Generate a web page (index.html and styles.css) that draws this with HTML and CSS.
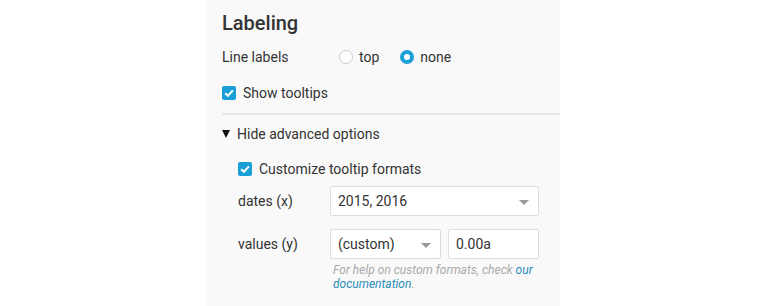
FILE: index.html
```html
<!DOCTYPE html>
<html lang="en">
<head>
  <meta charset="UTF-8" />
  <title>Labeling</title>
  <link rel="stylesheet" href="styles.css">
</head>
<body>
  <div class="panel">
    <h3 class="panel-title">Labeling</h3>

    <div class="row">
      <span class="row-label">Line labels</span>
      <label class="radio"><span class="radio-dot"></span>top</label>
      <label class="radio"><span class="radio-dot checked"></span>none</label>
    </div>

    <label class="check-row">
      <span class="checkbox"><svg viewBox="0 0 14 14" width="14" height="14"><path d="M3.2 7.2 L5.9 9.8 L10.9 4.4" fill="none" stroke="#fff" stroke-width="2"/></svg></span>
      Show tooltips
    </label>

    <hr class="divider">

    <div class="toggle"><span class="caret"></span>Hide advanced options</div>

    <div class="advanced">
      <label class="check-row">
        <span class="checkbox"><svg viewBox="0 0 14 14" width="14" height="14"><path d="M3.2 7.2 L5.9 9.8 L10.9 4.4" fill="none" stroke="#fff" stroke-width="2"/></svg></span>
        Customize tooltip formats
      </label>

      <div class="field">
        <span class="field-label">dates (x)</span>
        <div class="select wide">2015, 2016<span class="arrow"></span></div>
      </div>

      <div class="field">
        <span class="field-label">values (y)</span>
        <div class="select narrow">(custom)<span class="arrow"></span></div>
        <div class="text-input">0.00a</div>
      </div>

      <p class="help">For help on custom formats, check <a href="#">our documentation</a>.</p>
    </div>
  </div>
</body>
</html>
```

FILE: styles.css
```css
* {
  box-sizing: border-box;
  margin: 0;
  padding: 0;
}

body {
  font-family: Roboto, "Liberation Sans", sans-serif;
  background-color: #fff;
  color: #333;
  font-size: 14px;
  width: 765px;
  height: 306px;
  overflow: hidden;
}

.panel {
  background-color: #f9f9f9;
  width: 354px;
  height: 306px;
  margin-left: 206px;
  padding: 11px 0 0 16px;
}

.panel-title {
  font-size: 20px;
  font-weight: 500;
  line-height: 24px;
  color: #333;
}

.row {
  display: flex;
  align-items: center;
  height: 20px;
  margin-top: 12px;
}

.row-label {
  width: 117px;
}

.radio {
  display: flex;
  align-items: center;
  margin-right: 21px;
}

.radio-dot {
  width: 14px;
  height: 14px;
  border-radius: 50%;
  border: 1px solid #ccc;
  background-color: #fff;
  margin-right: 6px;
}

.radio-dot.checked {
  border: 4px solid #1a9fd6;
}

.check-row {
  display: flex;
  align-items: center;
  height: 20px;
  margin-top: 16px;
}

.checkbox {
  width: 14px;
  height: 14px;
  border-radius: 2px;
  background-color: #1a9fd6;
  margin-right: 7px;
  display: flex;
}

.divider {
  border: none;
  border-top: 2px solid #e8e8e8;
  margin-top: 10px;
}

.toggle {
  display: flex;
  align-items: center;
  height: 20px;
  margin-top: 9px;
}

.caret {
  width: 0;
  height: 0;
  border-left: 4.5px solid transparent;
  border-right: 4.5px solid transparent;
  border-top: 8px solid #111;
  margin-right: 7px;
}

.advanced {
  padding-left: 16px;
}

.advanced .check-row {
  margin-top: 15px;
}

.field {
  display: flex;
  align-items: center;
}

.advanced .check-row + .field {
  margin-top: 7px;
}

.field + .field {
  margin-top: 13px;
}

.field-label {
  width: 92px;
}

.select,
.text-input {
  height: 30px;
  background-color: #fff;
  border: 1px solid #ddd;
  border-radius: 2px;
  display: flex;
  align-items: center;
  padding: 0 7px;
  position: relative;
}

.select.wide {
  width: 209px;
}

.select.narrow {
  width: 111px;
}

.text-input {
  width: 91px;
  margin-left: 7px;
}

.arrow {
  position: absolute;
  right: 9px;
  top: 13px;
  border-left: 5px solid transparent;
  border-right: 5px solid transparent;
  border-top: 5px solid #999;
}

.help {
  margin: 4px 0 0 95px;
  font-size: 12px;
  font-style: italic;
  line-height: 14px;
  color: #aaa;
  width: 210px;
}

.help a {
  color: #2a8db8;
  text-decoration: none;
}
```
